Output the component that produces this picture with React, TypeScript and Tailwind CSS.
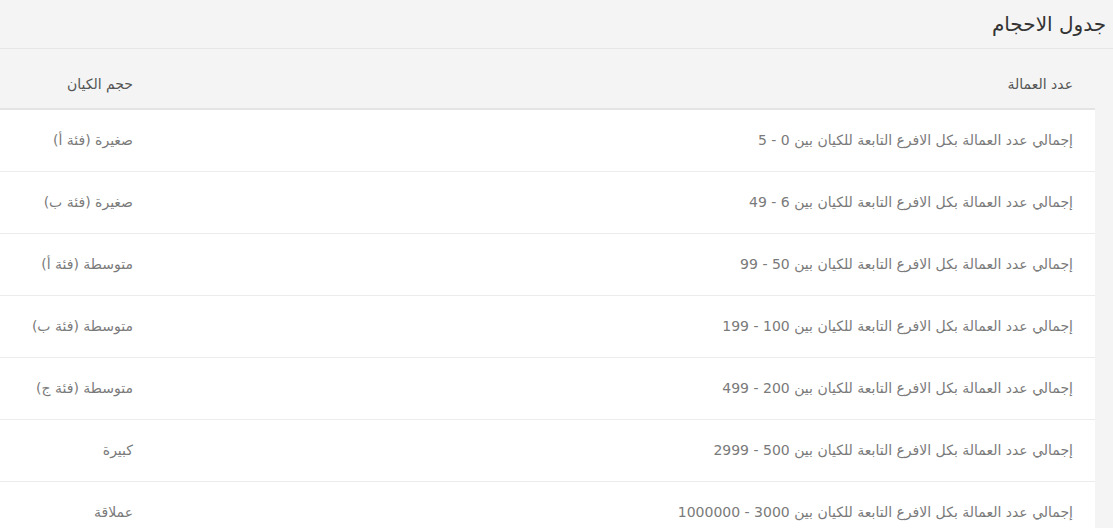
import React from "react";

const rows = [
  { range: "0 - 5", size: "صغيرة (فئة أ)" },
  { range: "6 - 49", size: "صغيرة (فئة ب)" },
  { range: "50 - 99", size: "متوسطة (فئة أ)" },
  { range: "100 - 199", size: "متوسطة (فئة ب)" },
  { range: "200 - 499", size: "متوسطة (فئة ج)" },
  { range: "500 - 2999", size: "كبيرة" },
  { range: "3000 - 1000000", size: "عملاقة" },
];

export default function App() {
  return (
    <div
      dir="rtl"
      className="w-[1113px] h-[528px] overflow-hidden bg-[#f4f4f4] font-['DejaVu_Sans',sans-serif]"
    >
      {/* Title */}
      <div className="h-[49px] border-b border-[#e6e6e6] pr-[7px] flex items-center">
        <h3 className="text-[20px] text-[#333] leading-none">جدول الاحجام</h3>
      </div>

      <div className="mr-[18px]">
        <table className="w-full border-collapse">
          <thead>
            <tr className="h-[60px] border-b-2 border-[#e4e4e4]">
              <th className="text-right pr-[22px] pt-[12px] text-[14px] font-medium text-[#555]">
                عدد العمالة
              </th>
              <th className="w-[155px] text-right pr-[22px] pt-[12px] text-[14px] font-medium text-[#555]">
                حجم الكيان
              </th>
            </tr>
          </thead>
          <tbody className="bg-white">
            {rows.map((r) => (
              <tr key={r.range} className="h-[62px] border-b border-[#ececec]">
                <td className="text-right pr-[22px] text-[14px] text-[#7a7a7a]">
                  إجمالي عدد العمالة بكل الافرع التابعة للكيان بين {r.range}
                </td>
                <td className="text-right pr-[22px] text-[14px] text-[#7a7a7a]">
                  {r.size}
                </td>
              </tr>
            ))}
          </tbody>
        </table>
      </div>
    </div>
  );
}
